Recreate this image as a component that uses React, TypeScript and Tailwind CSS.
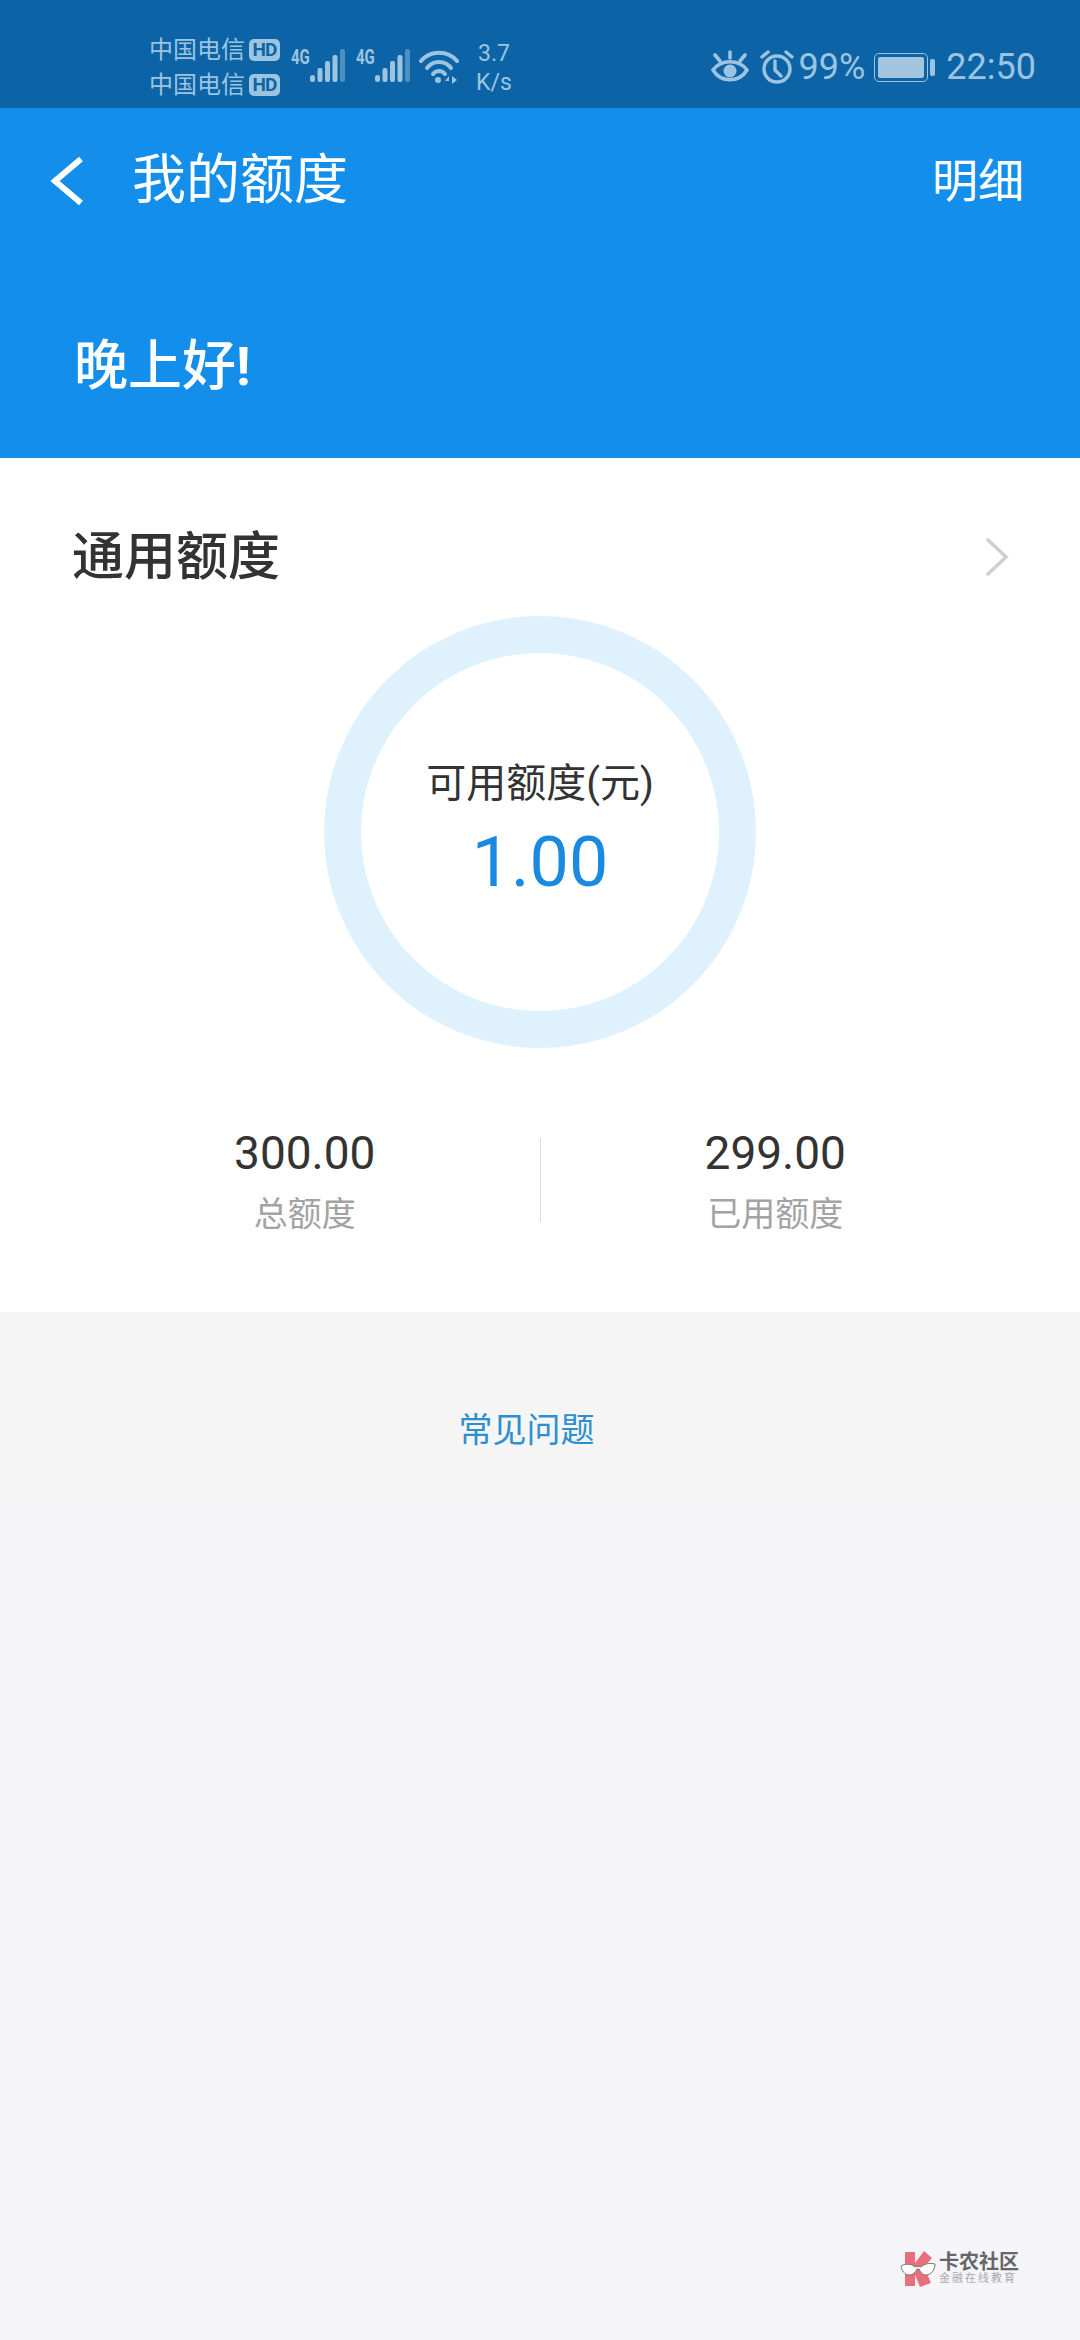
const fontStack = "font-['Roboto','Noto_Sans_CJK_SC',sans-serif]";

const Signal = () => (
	<div className="flex items-end">
		<span className="text-[20px] leading-[17px] font-bold mb-[17px] w-[19px] scale-x-75 origin-left whitespace-nowrap">4G</span>
		<svg width="35" height="34" viewBox="0 0 35 34" fill="#9cc4e0">
			<rect x="0" y="26" width="5" height="7" rx="2.5" />
			<rect x="7.5" y="19" width="5" height="14" rx="2" />
			<rect x="15" y="12" width="5" height="21" rx="2" />
			<rect x="22.5" y="6" width="5" height="27" rx="2" />
			<rect x="30" y="0" width="5" height="33" rx="2" opacity="0.45" />
		</svg>
	</div>
);

const Carrier = () => (
	<div className="flex items-center h-[35px]">
		<span className="text-[24px] leading-none w-[100px]">中国电信</span>
		<span className="bg-[#9cc4e0] text-[#0c64a6] text-[19px] leading-[22px] h-[22px] w-[31px] rounded-[5px] text-center font-bold tracking-[-1px]">HD</span>
	</div>
);

const StatusBar = () => (
	<div className={`h-[108px] bg-[#0c64a6] text-[#9cc4e0] flex items-start justify-between pl-[149px] pr-[44px] ${fontStack}`}>
		<div className="flex items-start">
			<div className="flex flex-col pt-[32px]">
				<Carrier />
				<Carrier />
			</div>
			<div className="flex gap-[11px] ml-[11px] pt-[49px]">
				<Signal />
				<Signal />
			</div>
			<svg className="ml-[9px] mt-[48px]" width="40" height="36" viewBox="0 0 40 36" fill="none" stroke="#9cc4e0" strokeWidth="4" strokeLinecap="round">
				<path d="M2 13C11 2 29 2 38 13" />
				<path d="M8 20C14 12 26 12 32 20" />
				<path d="M14 26C17 22 23 22 26 26" />
				<circle cx="19" cy="32" r="3" fill="#9cc4e0" stroke="none" />
				<path d="M26 33H30V28ZM33 28V36L38 32Z" fill="#9cc4e0" stroke="none" />
			</svg>
			<div className="ml-[16px] pt-[39px] text-[23px] leading-[29px] text-center w-[38px]">
				<div>3.7</div>
				<div>K/s</div>
			</div>
		</div>
		<div className="flex items-center pt-[49px]">
			<svg width="38" height="34" viewBox="0 0 38 34" fill="none" stroke="#9cc4e0" strokeWidth="3.6" strokeLinecap="round">
				<path d="M2 20C10 9 28 9 36 20C28 33 10 33 2 20Z" />
				<circle cx="19" cy="21" r="6.5" fill="#9cc4e0" stroke="none" />
				<path d="M19 2V8M4 5L9 11M34 5L29 11" />
			</svg>
			<svg className="ml-[11px]" width="34" height="34" viewBox="0 0 34 34" fill="none" stroke="#9cc4e0" strokeWidth="3.4" strokeLinecap="round">
				<circle cx="17" cy="19" r="13" />
				<path d="M15 11V20L21 26M2 7L8 2M32 7L26 2" />
			</svg>
			<span className="ml-[5px] text-[36px] leading-none">99%</span>
			<div className="ml-[9px] flex items-center">
				<div className="w-[54px] h-[29px] rounded-[5px] border border-[#9cc4e0] p-[3px]">
					<div className="w-full h-full rounded-[2px] bg-[#a3c5de]" />
				</div>
				<div className="ml-[2px] w-[5px] h-[17px] rounded-[2px] bg-[#9cc4e0]" />
			</div>
			<span className="ml-[11px] text-[36px] leading-none">22:50</span>
		</div>
	</div>
);

const Stat = ({ value, label }: { value: string; label: string }) => (
	<div className="flex-1 flex flex-col items-center">
		<span className="text-[46px] leading-[54px] text-[#333333]">{value}</span>
		<span className="text-[34px] leading-[40px] mt-[14px] text-[#a3a3a3]">{label}</span>
	</div>
);

const Logo = () => (
	<div className="absolute left-[900px] top-[2250px] flex items-center gap-[3px]">
		<svg width="36" height="38" viewBox="0 0 36 38">
			<path d="M5 2H15V13L24 1L32 8L24 17L31 33L20 37L15 25V36H5Z" fill="#e8707c" />
			<path d="M1 16C6 13 12 14 15 17C17 16 19 16 21 17C25 13 31 13 35 14C35 20 31 25 26 25C22 25 20 21 19 19H17C16 22 13 25 9 25C5 25 2 21 1 16Z" fill="#ffffff" stroke="#777777" strokeWidth="1" />
		</svg>
		<div className="flex flex-col">
			<span className="text-[20px] leading-[20px] font-bold text-[#666666]">卡农社区</span>
			<span className="text-[11px] leading-[14px] text-[#aaaaaa] tracking-[2px]">金融在线教育</span>
		</div>
	</div>
);

export default function App() {
	return (
		<div className={`relative min-h-[2340px] bg-[#f4f4f9] ${fontStack}`}>
			<StatusBar />
			<div className="bg-[#138eeb] h-[350px] text-white">
				<div className="h-[146px] flex items-center justify-between pl-[50px] pr-[56px]">
					<div className="flex items-center">
						<svg width="34" height="48" viewBox="0 0 34 48" fill="none" stroke="#ffffff" strokeWidth="6">
							<path d="M31 2L5 24L31 46" />
						</svg>
						<h1 className="ml-[48px] text-[54px] leading-none">我的额度</h1>
					</div>
					<span className="text-[46px] leading-none">明细</span>
				</div>
				<div className="pl-[74px] pt-[78px] text-[54px] leading-[70px] font-medium">
					晚上好<span className="font-bold">!</span>
				</div>
			</div>
			<div className="bg-white h-[854px] flex flex-col">
				<div className="h-[158px] pt-[68px] pl-[72px] pr-[71px] flex items-start justify-between">
					<h2 className="text-[52px] leading-[64px] font-medium text-[#333333]">通用额度</h2>
					<svg className="mt-[11px]" width="24" height="40" viewBox="0 0 24 40" fill="none" stroke="#cfcfcf" strokeWidth="3.5" strokeLinecap="round">
						<path d="M3 3L21 20L3 37" />
					</svg>
				</div>
				<div className="self-center w-[432px] h-[432px] rounded-full border-[37px] border-[#e0f1fe] flex flex-col items-center justify-center">
					<span className="text-[40px] leading-[48px] text-[#333333]">可用额度(元)</span>
					<span className="text-[70px] leading-[84px] mt-[12px] text-[#1a8ae0]">1.00</span>
				</div>
				<div className="mt-[78px] px-[70px] flex items-start">
					<Stat value="300.00" label="总额度" />
					<div className="w-px h-[84px] mt-[12px] bg-[#dddddd]" />
					<Stat value="299.00" label="已用额度" />
				</div>
			</div>
			<div className="bg-[#f5f5f5] h-[201px] pt-[95px]">
				<p className="text-center pr-[27px] text-[34px] leading-[46px] text-[#2e8fcf]">常见问题</p>
			</div>
			<Logo />
		</div>
	);
}
